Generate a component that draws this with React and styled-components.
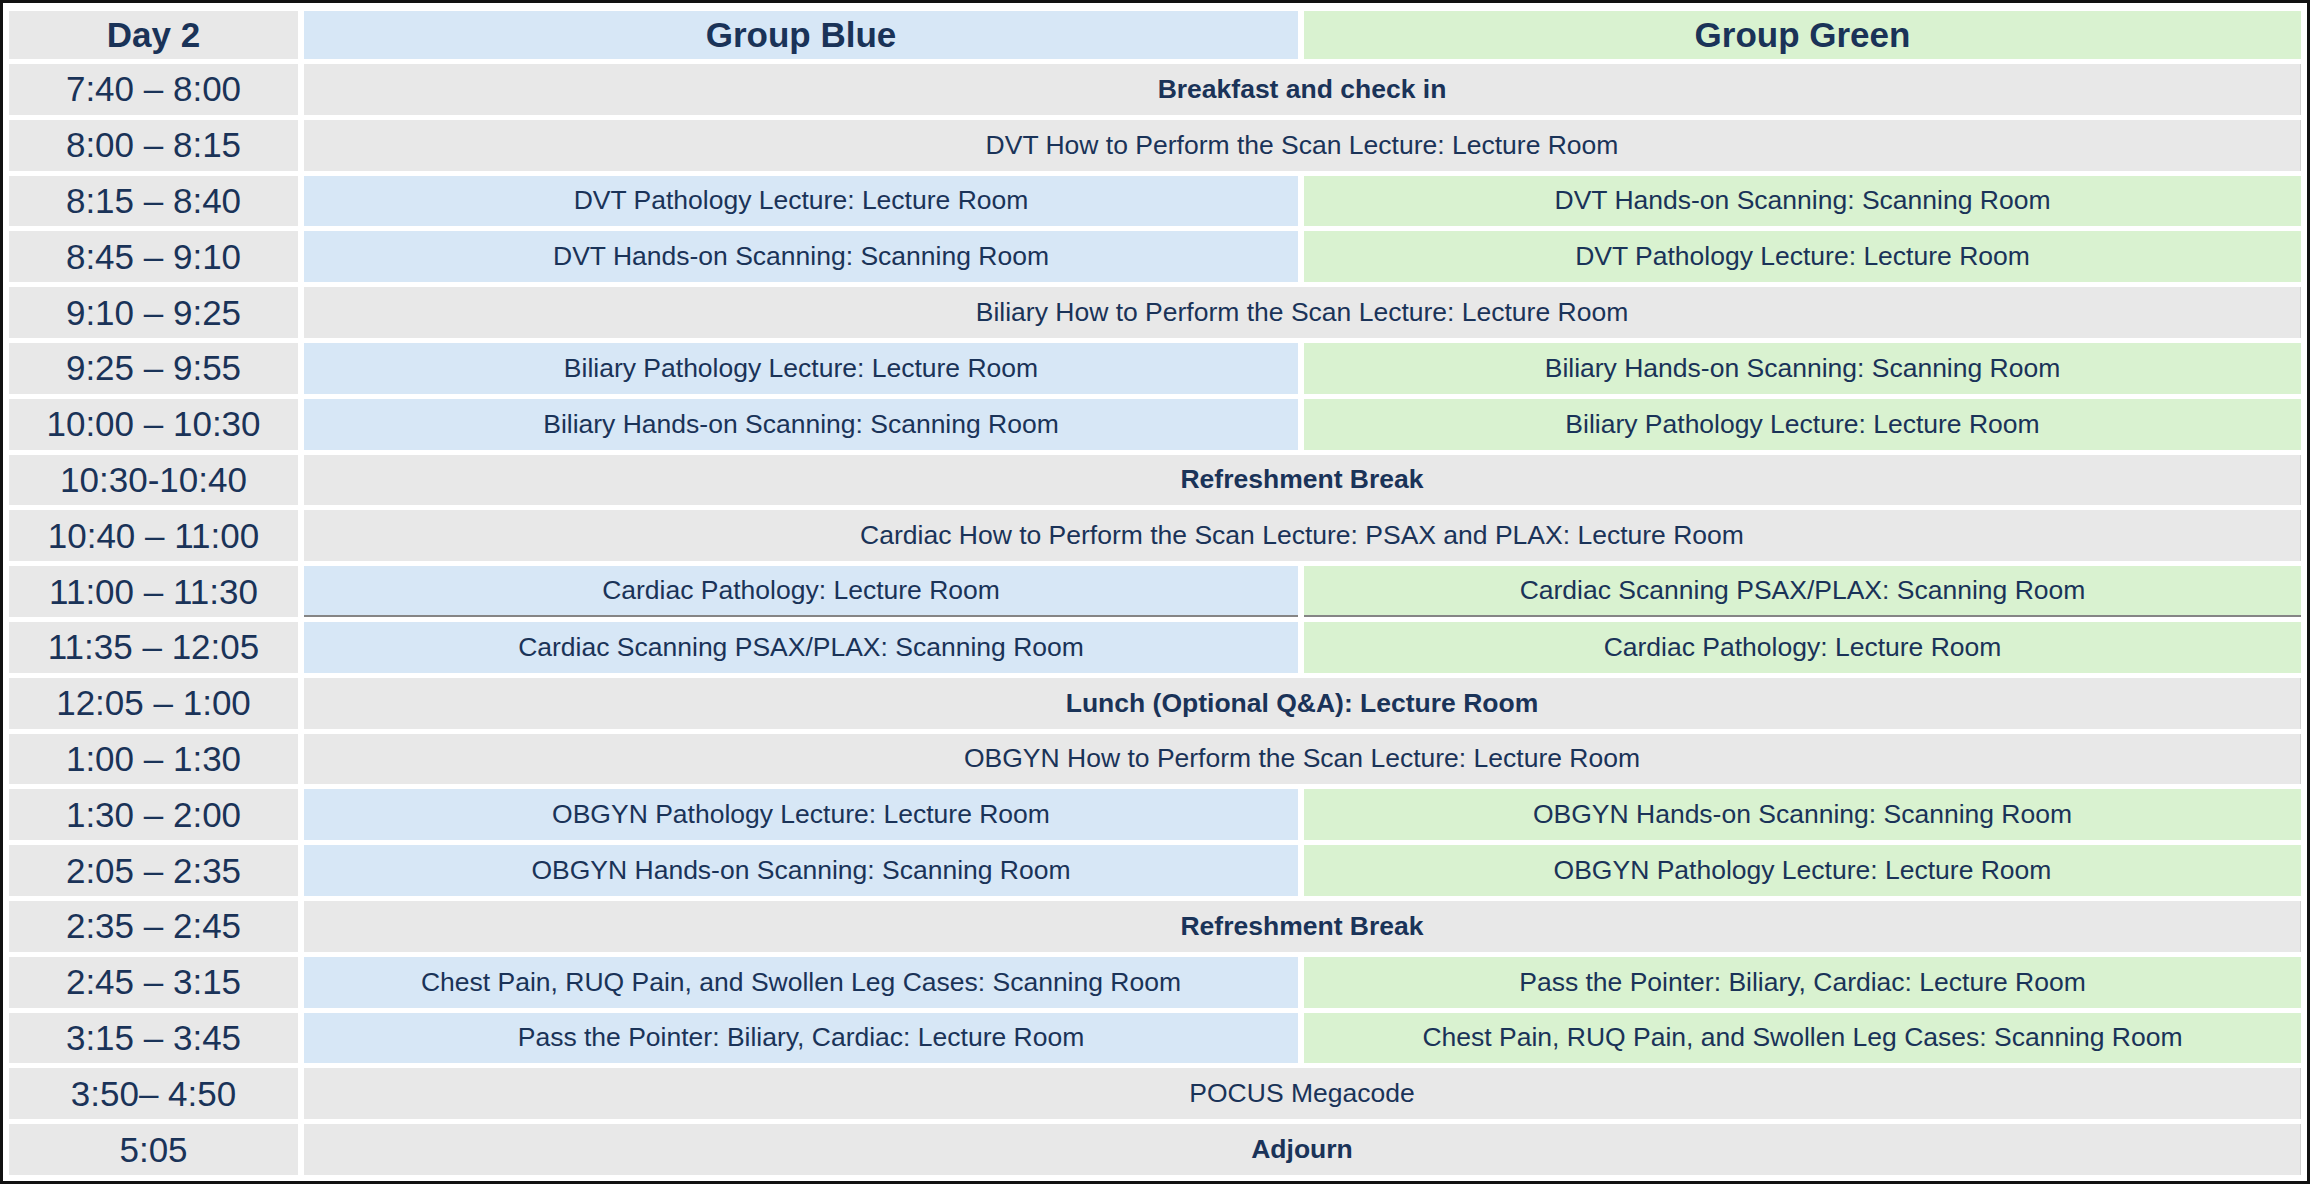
import React from "react";
import styled, { createGlobalStyle } from "styled-components";

const GlobalStyle = createGlobalStyle`
    html, body {
        margin: 0;
        padding: 0;
        background: #ffffff;
    }
    body {
        font-family: "Liberation Sans", Arial, sans-serif;
    }
`;

const tones = {
    gray: "#e8e8e8",
    blue: "#d7e7f6",
    green: "#d9f2d0",
};

const Frame = styled.div`
    width: 2310px;
    height: 1184px;
    box-sizing: border-box;
    border: 3px solid #111111;
    padding: 8px 6px 0 6px;
    background: #ffffff;
`;

const Grid = styled.div`
    display: grid;
    grid-template-columns: 289px 994px 997px;
    grid-template-rows: 48px repeat(20, 50.8px);
    column-gap: 6px;
    row-gap: 5px;
`;

const Cell = styled.div`
    grid-column: ${({ $span }) => ($span ? "2 / span 2" : "auto")};
    display: flex;
    align-items: center;
    justify-content: center;
    background: ${({ $tone }) => tones[$tone || "gray"]};
    color: #1a3358;
    font-size: 26.5px;
    font-weight: ${({ $bold }) => ($bold ? 700 : 400)};
    white-space: nowrap;
    box-sizing: border-box;
    border-bottom: ${({ $ruled }) => ($ruled ? "2px solid #858585" : "none")};
    border-right: ${({ $span }) => ($span ? "1px solid #d2d2d2" : "none")};
`;

const TimeCell = styled(Cell)`
    font-size: 35px;
`;

const HeadCell = styled(Cell)`
    font-size: 35px;
    font-weight: 700;
`;

const rows = [
    { time: "7:40 – 8:00", all: "Breakfast and check in", bold: true },
    { time: "8:00 – 8:15", all: "DVT How to Perform the Scan Lecture: Lecture Room" },
    { time: "8:15 – 8:40", blue: "DVT Pathology Lecture: Lecture Room", green: "DVT Hands-on Scanning: Scanning Room" },
    { time: "8:45 – 9:10", blue: "DVT Hands-on Scanning: Scanning Room", green: "DVT Pathology Lecture: Lecture Room" },
    { time: "9:10 – 9:25", all: "Biliary How to Perform the Scan Lecture: Lecture Room" },
    { time: "9:25 – 9:55", blue: "Biliary Pathology Lecture: Lecture Room", green: "Biliary Hands-on Scanning: Scanning Room" },
    { time: "10:00 – 10:30", blue: "Biliary Hands-on Scanning: Scanning Room", green: "Biliary Pathology Lecture: Lecture Room" },
    { time: "10:30-10:40", all: "Refreshment Break", bold: true },
    { time: "10:40 – 11:00", all: "Cardiac How to Perform the Scan Lecture: PSAX and PLAX: Lecture Room" },
    { time: "11:00 – 11:30", blue: "Cardiac Pathology: Lecture Room", green: "Cardiac Scanning PSAX/PLAX: Scanning Room", ruled: true },
    { time: "11:35 – 12:05", blue: "Cardiac Scanning PSAX/PLAX: Scanning Room", green: "Cardiac Pathology: Lecture Room" },
    { time: "12:05 – 1:00", all: "Lunch (Optional Q&A): Lecture Room", bold: true },
    { time: "1:00 – 1:30", all: "OBGYN How to Perform the Scan Lecture: Lecture Room" },
    { time: "1:30 – 2:00", blue: "OBGYN Pathology Lecture: Lecture Room", green: "OBGYN Hands-on Scanning: Scanning Room" },
    { time: "2:05 – 2:35", blue: "OBGYN Hands-on Scanning: Scanning Room", green: "OBGYN Pathology Lecture: Lecture Room" },
    { time: "2:35 – 2:45", all: "Refreshment Break", bold: true },
    { time: "2:45 – 3:15", blue: "Chest Pain, RUQ Pain, and Swollen Leg Cases: Scanning Room", green: "Pass the Pointer: Biliary, Cardiac: Lecture Room" },
    { time: "3:15 – 3:45", blue: "Pass the Pointer: Biliary, Cardiac: Lecture Room", green: "Chest Pain, RUQ Pain, and Swollen Leg Cases: Scanning Room" },
    { time: "3:50– 4:50", all: "POCUS Megacode" },
    { time: "5:05", all: "Adjourn", bold: true },
];

export default function App() {
    return (
        <>
            <GlobalStyle />
            <Frame>
                <Grid>
                    <HeadCell>Day 2</HeadCell>
                    <HeadCell $tone="blue">Group Blue</HeadCell>
                    <HeadCell $tone="green">Group Green</HeadCell>
                    {rows.map(row => (
                        <React.Fragment key={row.time}>
                            <TimeCell>{row.time}</TimeCell>
                            {row.all ? (
                                <Cell $span $bold={row.bold}>{row.all}</Cell>
                            ) : (
                                <>
                                    <Cell $tone="blue" $ruled={row.ruled}>{row.blue}</Cell>
                                    <Cell $tone="green" $ruled={row.ruled}>{row.green}</Cell>
                                </>
                            )}
                        </React.Fragment>
                    ))}
                </Grid>
            </Frame>
        </>
    );
}
